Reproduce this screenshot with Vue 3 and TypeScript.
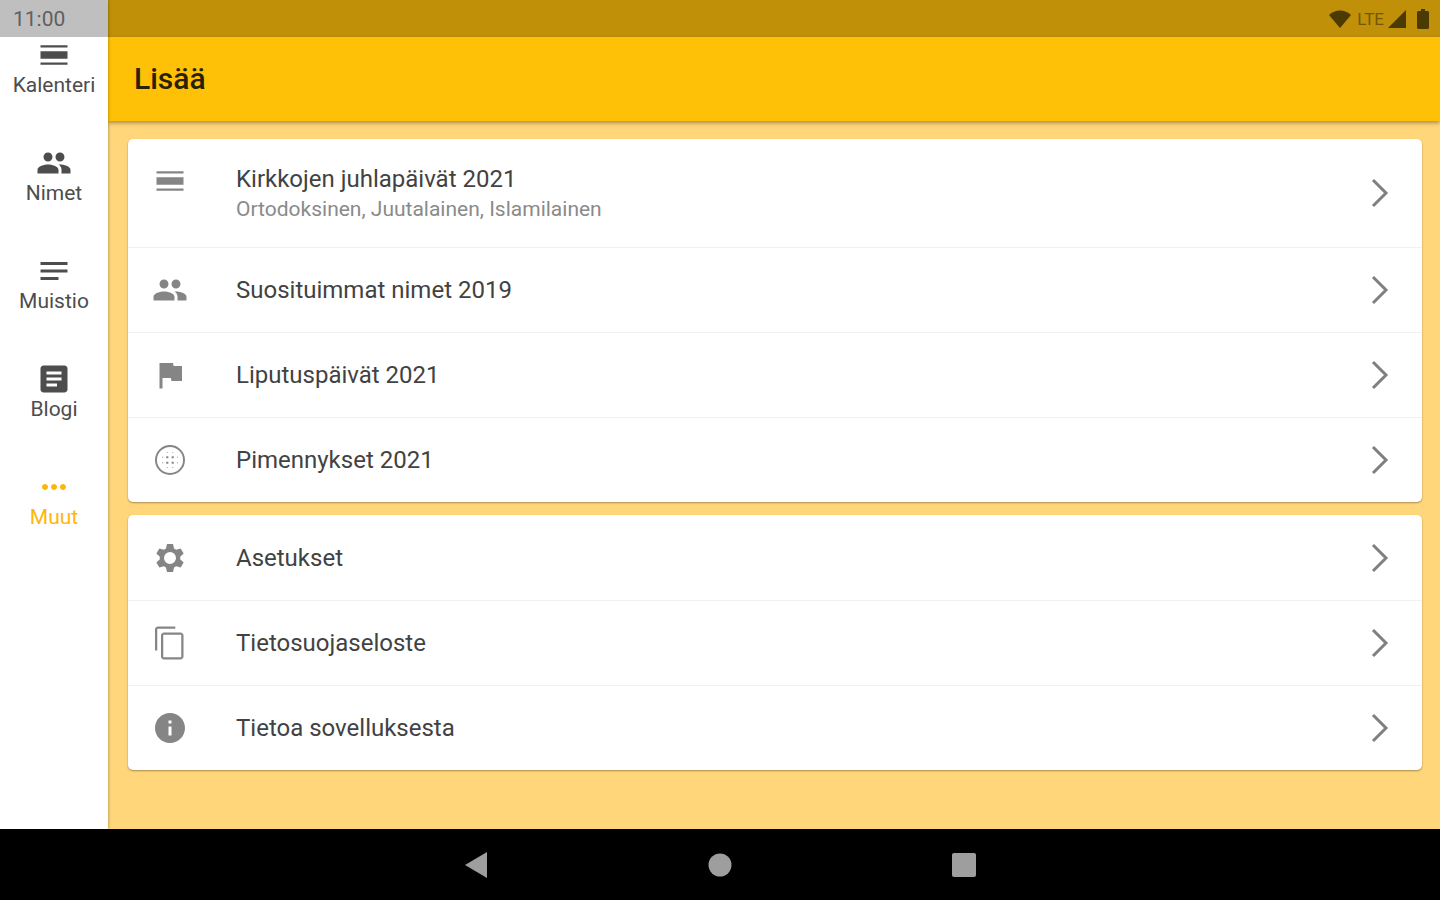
<script setup lang="ts">
interface IconShape {
  path: string
}

interface MenuRow {
  icon: string
  title: string
  subtitle?: string
}

const icons: Record<string, IconShape> = {
  calendar: { path: 'M3 5.5h18V7H3zM3 9.5h18v5H3zM3 17h18v1.5H3z' },
  people: {
    path: 'M16 11c1.66 0 2.99-1.34 2.99-3S17.66 5 16 5s-3 1.34-3 3 1.34 3 3 3zm-8 0c1.66 0 2.99-1.34 2.99-3S9.66 5 8 5 5 6.34 5 8s1.34 3 3 3zm0 2c-2.33 0-7 1.17-7 3.5V19h14v-2.5c0-2.33-4.67-3.5-7-3.5zm8 0c-.29 0-.62.02-.97.05 1.16.84 1.97 1.97 1.97 3.45V19h6v-2.5c0-2.33-4.67-3.5-7-3.5z',
  },
  notes: { path: 'M3 6h18v2H3zM3 11h18v2H3zM3 16h12v2H3z' },
  article: {
    path: 'M19 3H5c-1.1 0-2 .9-2 2v14c0 1.1.9 2 2 2h14c1.1 0 2-.9 2-2V5c0-1.1-.9-2-2-2zm-5 14H7v-2h7v2zm3-4H7v-2h10v2zm0-4H7V7h10v2z',
  },
  more: {
    path: 'M6 10c-1.1 0-2 .9-2 2s.9 2 2 2 2-.9 2-2-.9-2-2-2zm12 0c-1.1 0-2 .9-2 2s.9 2 2 2 2-.9 2-2-.9-2-2-2zm-6 0c-1.1 0-2 .9-2 2s.9 2 2 2 2-.9 2-2-.9-2-2-2z',
  },
  flag: { path: 'M14.4 6L14 4H5v17h2v-7h5.6l.4 2h7V6z' },
  eclipse: {
    path: 'M12 2a10 10 0 1 0 0 20 10 10 0 0 0 0-20zm0 1.3a8.7 8.7 0 1 1 0 17.4 8.7 8.7 0 0 1 0-17.4zM9.500 9.500h1.400v1.400H9.500zM13.100 9.500h1.400v1.400h-1.400zM9.500 13.100h1.400v1.400H9.500zM13.100 13.100h1.400v1.400h-1.400zM9.900 6.800h.6v.6h-.6zM13.500 6.800h.6v.6h-.6zM9.900 16.600h.6v.6h-.6zM13.500 16.600h.6v.6h-.6zM6.800 9.900h.6v.6h-.6zM16.600 9.900h.6v.6h-.6zM6.800 13.500h.6v.6h-.6zM16.600 13.500h.6v.6h-.6z',
  },
  settings: {
    path: 'M9.300 5.700L10 2.600H14L14.700 5.700L16.100 6.500L19.100 5.600L21.100 9L18.800 11.200V12.800L21.100 15L19.100 18.400L16.100 17.500L14.700 18.300L14 21.400H10L9.300 18.300L7.900 17.500L4.900 18.400L2.900 15L5.200 12.800V11.200L2.900 9L4.900 5.600L7.900 6.500zM12 8a4 4 0 1 0 0 8 4 4 0 0 0 0-8z',
  },
  copy: {
    path: 'M15.5 1H4c-1.1 0-2 .9-2 2v14h1.5V2.5h12V1zm3.5 4H8c-1.1 0-2 .9-2 2v14c0 1.1.9 2 2 2h11c1.1 0 2-.9 2-2V7c0-1.1-.9-2-2-2zm.5 16.500h-12v-15h12v15z',
  },
  info: { path: 'M12 2C6.480 2 2 6.480 2 12s4.480 10 10 10 10-4.480 10-10S17.520 2 12 2zm1 15h-2v-6h2v6zm0-8h-2V7h2v2z' },
}

const tabs = [
  { icon: 'calendar', label: 'Kalenteri', active: false },
  { icon: 'people', label: 'Nimet', active: false },
  { icon: 'notes', label: 'Muistio', active: false },
  { icon: 'article', label: 'Blogi', active: false },
  { icon: 'more', label: 'Muut', active: true },
]

const groups: MenuRow[][] = [
  [
    { icon: 'calendar', title: 'Kirkkojen juhlapäivät 2021', subtitle: 'Ortodoksinen, Juutalainen, Islamilainen' },
    { icon: 'people', title: 'Suosituimmat nimet 2019' },
    { icon: 'flag', title: 'Liputuspäivät 2021' },
    { icon: 'eclipse', title: 'Pimennykset 2021' },
  ],
  [
    { icon: 'settings', title: 'Asetukset' },
    { icon: 'copy', title: 'Tietosuojaseloste' },
    { icon: 'info', title: 'Tietoa sovelluksesta' },
  ],
]
</script>

<template>
  <div class="screen">
    <div class="app">
      <aside class="side">
        <div class="status status-left">11:00</div>
        <nav class="tabs">
          <button v-for="t in tabs" :key="t.label" type="button" class="tab" :class="{ active: t.active }">
            <svg class="icon" viewBox="0 0 24 24" aria-hidden="true"><path :d="icons[t.icon].path" /></svg>
            <span>{{ t.label }}</span>
          </button>
        </nav>
      </aside>
      <div class="main">
        <div class="status status-right">
          <svg class="wifi" viewBox="0 0 22 18" aria-hidden="true"><path d="M11 18L0 5C6-1 16-1 22 5z" /></svg>
          <span class="lte">LTE</span>
          <svg class="signal" viewBox="0 0 18 18" aria-hidden="true"><path d="M18 0v18H0z" /></svg>
          <svg class="battery" viewBox="0 0 12 20" aria-hidden="true">
            <path d="M4 0h4v2h3l1 1v16l-1 1H1l-1-1V3l1-1h3z" />
          </svg>
        </div>
        <header class="bar"><h1>Lisää</h1></header>
        <main class="content">
          <section v-for="(rows, g) in groups" :key="g" class="card">
            <button
              v-for="r in rows"
              :key="r.title"
              type="button"
              class="row"
              :class="{ tall: r.subtitle }"
            >
              <svg class="icon" viewBox="0 0 24 24" aria-hidden="true"><path :d="icons[r.icon].path" /></svg>
              <span class="text">
                <span class="title">{{ r.title }}</span>
                <span v-if="r.subtitle" class="subtitle">{{ r.subtitle }}</span>
              </span>
              <svg class="chevron" viewBox="0 0 18 30" aria-hidden="true"><path d="M2 2l13 13L2 28" /></svg>
            </button>
          </section>
        </main>
      </div>
    </div>
    <nav class="system">
      <button type="button" aria-label="Takaisin">
        <svg viewBox="0 0 24 28" aria-hidden="true"><path d="M23 1v26L1 14z" /></svg>
      </button>
      <button type="button" aria-label="Koti">
        <svg viewBox="0 0 24 28" aria-hidden="true"><circle cx="12" cy="14" r="11.500" /></svg>
      </button>
      <button type="button" aria-label="Viimeisimmät">
        <svg viewBox="0 0 24 28" aria-hidden="true"><rect y="2" width="24" height="24" rx="2" /></svg>
      </button>
    </nav>
  </div>
</template>

<style>
body {
  margin: 0;
}
</style>

<style scoped>
.screen {
  min-height: 100vh;
  display: flex;
  flex-direction: column;
  font-family: Roboto, "Liberation Sans", sans-serif;
  background: #000;
}
button {
  border: 0;
  margin: 0;
  padding: 0;
  background: none;
  font: inherit;
  color: inherit;
  cursor: pointer;
}
svg {
  display: block;
  flex: none;
  fill: currentColor;
}
.app {
  flex: 1;
  display: flex;
  background: #ffd67a;
}
.side {
  flex: none;
  width: 108px;
  background: #fff;
  box-shadow: 0 0 3px rgba(0, 0, 0, 0.4);
  z-index: 1;
}
.status {
  height: 37px;
  display: flex;
  align-items: center;
  box-sizing: border-box;
}
.status-left {
  padding-left: 13px;
  background: #bfbfbf;
  color: #606060;
  font-size: 21px;
}
.status-right {
  justify-content: flex-end;
  padding-right: 11px;
  background: #bf9008;
  color: #4c3a03;
}
.wifi {
  width: 22px;
  height: 18px;
}
.lte {
  margin: 0 4px 0 6px;
  font-size: 17px;
  color: #735705;
}
.signal {
  width: 18px;
  height: 18px;
}
.battery {
  width: 12px;
  height: 20px;
  margin-left: 11px;
}
.icon {
  width: 36px;
  height: 36px;
}
.tabs {
  display: flex;
  flex-direction: column;
  gap: 48px;
}
.tab {
  display: flex;
  flex-direction: column;
  align-items: center;
  font-size: 21px;
  line-height: 24px;
  color: #4d4d4d;
}
.tab.active {
  color: #ffb60a;
}
.main {
  flex: 1;
  min-width: 0;
  display: flex;
  flex-direction: column;
}
.bar {
  height: 84px;
  display: flex;
  align-items: center;
  padding-left: 26px;
  background: #ffc107;
  box-shadow: 0 2px 4px rgba(0, 0, 0, 0.35);
}
h1 {
  margin: 0;
  font-size: 30px;
  line-height: 36px;
  font-weight: 500;
  color: #2a2105;
}
.content {
  flex: 1;
  display: flex;
  flex-direction: column;
  gap: 13px;
  padding: 18px 18px 18px 20px;
}
.card {
  display: flex;
  flex-direction: column;
  border-radius: 5px;
  background: #fff;
  box-shadow: 0 1px 2px rgba(0, 0, 0, 0.35);
}
.row {
  display: flex;
  align-items: center;
  min-height: 85px;
  box-sizing: border-box;
  padding: 0 33px 0 24px;
  text-align: left;
  color: #858585;
}
.row.tall {
  min-height: 108px;
}
.row.tall .icon {
  align-self: flex-start;
  margin-top: 24px;
}
.row + .row {
  border-top: 1px solid #f0f0f0;
}
.text {
  flex: 1;
  display: flex;
  flex-direction: column;
  margin-left: 48px;
}
.title {
  font-size: 24px;
  line-height: 32px;
  color: #424242;
}
.subtitle {
  font-size: 21px;
  line-height: 28px;
  color: #8a8a8a;
}
.chevron {
  width: 18px;
  height: 30px;
  fill: none;
  stroke: #808080;
  stroke-width: 3px;
}
.system {
  height: 71px;
  display: flex;
  justify-content: center;
  align-items: center;
  gap: 220px;
  background: #000;
  color: #9e9e9e;
}
.system svg {
  width: 24px;
  height: 28px;
}
</style>
